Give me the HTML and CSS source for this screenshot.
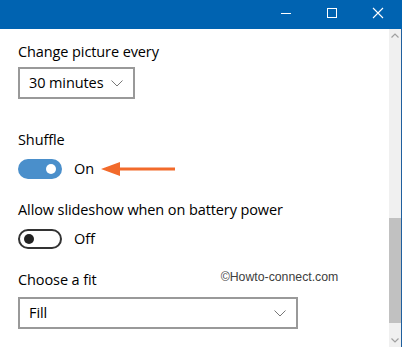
FILE: index.html
```html
<!DOCTYPE html>
<html>
<head>
<meta charset="utf-8">
<link rel="stylesheet" href="styles.css">
</head>
<body>
<div class="window">
  <div class="titlebar">
    <div class="caption-btn">
      <svg width="12" height="12" viewBox="0 0 12 12"><path d="M1 6.5H11" stroke="#fff" stroke-width="1" fill="none"/></svg>
    </div>
    <div class="caption-btn">
      <svg width="12" height="12" viewBox="0 0 12 12"><rect x="1.5" y="1.5" width="9" height="9" stroke="#fff" stroke-width="1" fill="none"/></svg>
    </div>
    <div class="caption-btn">
      <svg width="12" height="12" viewBox="0 0 12 12"><path d="M1 1L11 11M11 1L1 11" stroke="#fff" stroke-width="1.1" fill="none"/></svg>
    </div>
  </div>
  <div class="body">
    <div class="content">
      <div class="label l1">Change picture every</div>
      <div class="select select-short d1">
        <span class="select-text">30 minutes</span>
        <svg class="chev" width="12" height="7" viewBox="0 0 12 7"><path d="M0.5 0.5L6 6L11.5 0.5" stroke="#777" stroke-width="1" fill="none"/></svg>
      </div>

      <div class="label l2">Shuffle</div>
      <div class="toggle-row t1">
        <div class="toggle on"><span class="knob"></span></div>
        <span class="toggle-text">On</span>
        <svg class="arrow" width="74" height="16" viewBox="0 0 74 16"><path d="M0 8L19 1V6.5H74V9.5H19V15Z" fill="#f26a2b"/></svg>
      </div>

      <div class="label l3">Allow slideshow when on battery power</div>
      <div class="toggle-row t2">
        <div class="toggle off"><span class="knob"></span></div>
        <span class="toggle-text">Off</span>
      </div>

      <div class="label-row l4">
        <div class="label">Choose a fit</div>
        <div class="watermark">©Howto-connect.com</div>
      </div>
      <div class="select select-long d2">
        <span class="select-text">Fill</span>
        <svg class="chev" width="12" height="7" viewBox="0 0 12 7"><path d="M0.5 0.5L6 6L11.5 0.5" stroke="#777" stroke-width="1" fill="none"/></svg>
      </div>
    </div>
    <div class="scrollbar">
      <svg class="sb-arrow" width="8" height="5" viewBox="0 0 8 5"><path d="M0.5 4.5L4 1L7.5 4.5" stroke="#a0a0a0" stroke-width="1.2" fill="none"/></svg>
      <div class="sb-track">
        <div class="sb-thumb"></div>
      </div>
      <svg class="sb-arrow" width="8" height="5" viewBox="0 0 8 5"><path d="M0.5 0.5L4 4L7.5 0.5" stroke="#a0a0a0" stroke-width="1.2" fill="none"/></svg>
    </div>
  </div>
</div>
</body>
</html>
```
FILE: styles.css
```css
html, body {
  margin: 0;
  padding: 0;
  background: #ffffff;
}
.window {
  width: 402px;
  height: 347px;
  display: flex;
  flex-direction: column;
  overflow: hidden;
  font-family: "Open Sans", "Noto Sans", sans-serif;
  color: #000;
}
.titlebar {
  height: 29px;
  background: #0063b1;
  display: flex;
  justify-content: flex-end;
  align-items: flex-start;
  padding-right: 1px;
  flex: none;
}
.caption-btn {
  width: 46px;
  height: 29px;
  display: flex;
  align-items: flex-start;
  justify-content: center;
  padding-top: 7px;
  box-sizing: border-box;
}
.body {
  flex: 1;
  display: flex;
  border-right: 1px solid #1f5f9e;
}
.content {
  flex: 1;
  padding: 13px 0 0 18px;
  display: flex;
  flex-direction: column;
  align-items: flex-start;
}
.label {
  font-size: 14.5px;
  line-height: 20px;
  color: #000;
  letter-spacing: -0.1px;
}
.l2 { margin-top: 31px; }
.l3 { margin-top: 21px; }
.l4 { margin-top: 21px; }
.select {
  box-sizing: border-box;
  height: 32px;
  border: 2px solid #999999;
  display: flex;
  align-items: center;
  justify-content: space-between;
  padding: 0 10px 0 9px;
}
.select-text {
  font-size: 14.5px;
  line-height: 20px;
  letter-spacing: -0.1px;
}
.select-short { width: 117px; margin-top: 5px; }
.select-long { width: 280px; margin-top: 7px; }
.chev { flex: none; }
.toggle-row {
  display: flex;
  align-items: center;
  height: 20px;
  margin-top: 9px;
}
.toggle {
  box-sizing: border-box;
  width: 44px;
  height: 20px;
  border-radius: 10px;
  position: relative;
  flex: none;
}
.toggle.on {
  background: #4a8fcb;
}
.toggle.off {
  border: 2px solid #333333;
  background: #fff;
}
.knob {
  position: absolute;
  width: 10px;
  height: 10px;
  border-radius: 50%;
  top: 50%;
  margin-top: -5px;
}
.toggle.on .knob {
  background: #ffffff;
  right: 6px;
}
.toggle.off .knob {
  background: #222;
  left: 4px;
}
.toggle-text {
  font-size: 14.5px;
  line-height: 20px;
  margin-left: 12px;
}
.arrow {
  margin-left: 7px;
  flex: none;
}
.label-row {
  display: flex;
  align-items: flex-start;
  width: 340px;
}
.watermark {
  font-family: "Liberation Sans", Arial, sans-serif;
  font-size: 12.3px;
  line-height: 14px;
  color: #404040;
  margin-left: 124px;
  margin-top: 0px;
}
.scrollbar {
  width: 12px;
  background: #f0f0f0;
  display: flex;
  flex-direction: column;
  align-items: center;
  flex: none;
}
.sb-arrow {
  flex: none;
  margin: 4px 0;
}
.sb-track {
  flex: 1;
  width: 100%;
  display: flex;
  flex-direction: column;
  justify-content: flex-end;
  padding-bottom: 11px;
}
.sb-thumb {
  width: 100%;
  height: 105px;
  background: #c1c1c1;
}
```
